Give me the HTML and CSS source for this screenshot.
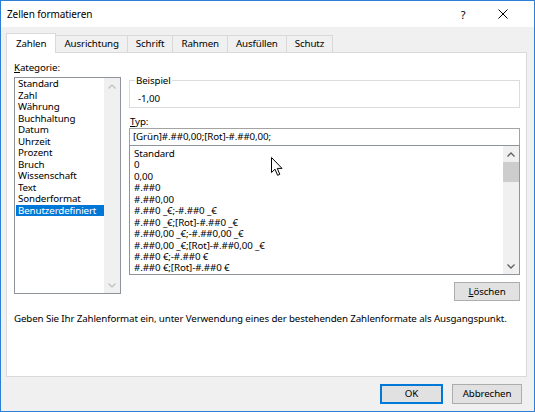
FILE: index.html
```html
<!DOCTYPE html>
<html lang="de">
<head>
<meta charset="utf-8">
<title>Zellen formatieren</title>
<link rel="stylesheet" href="styles.css">
</head>
<body>
<div class="window">
  <div class="titlebar">
    <span class="title">Zellen formatieren</span>
    <span class="help">?</span>
    <span class="close"><svg width="10" height="10" viewBox="0 0 10 10"><path d="M0.5 0.5L9.5 9.5M9.5 0.5L0.5 9.5" stroke="#000" stroke-width="1" fill="none"/></svg></span>
  </div>
  <div class="tabs">
    <div class="tab active">Zahlen</div>
    <div class="tab">Ausrichtung</div>
    <div class="tab">Schrift</div>
    <div class="tab">Rahmen</div>
    <div class="tab">Ausfüllen</div>
    <div class="tab">Schutz</div>
  </div>
  <div class="panel">
    <div class="cols">
      <div class="left">
        <div class="label"><u>K</u>ategorie:</div>
        <div class="listbox cat">
          <ul class="items">
            <li>Standard</li>
            <li>Zahl</li>
            <li>Währung</li>
            <li>Buchhaltung</li>
            <li>Datum</li>
            <li>Uhrzeit</li>
            <li>Prozent</li>
            <li>Bruch</li>
            <li>Wissenschaft</li>
            <li>Text</li>
            <li>Sonderformat</li>
            <li class="selected">Benutzerdefiniert</li>
          </ul>
          <div class="vscroll disabled">
            <div class="arrow"><svg width="8" height="5" viewBox="0 0 8 5"><path d="M0.5 4.5L4 1L7.5 4.5" stroke="currentColor" stroke-width="1.2" fill="none"/></svg></div>
            <div class="track"></div>
            <div class="arrow"><svg width="8" height="5" viewBox="0 0 8 5"><path d="M0.5 0.5L4 4L7.5 0.5" stroke="currentColor" stroke-width="1.2" fill="none"/></svg></div>
          </div>
        </div>
      </div>
      <div class="right">
        <fieldset class="sample">
          <legend>Beispiel</legend>
          <div class="sample-val">-1,00</div>
        </fieldset>
        <div class="label typ"><u>T</u>yp:</div>
        <div class="input">[Grün]#.##0,00;[Rot]-#.##0,00;</div>
        <div class="listbox fmt">
          <ul class="items">
            <li>Standard</li>
            <li>0</li>
            <li>0,00</li>
            <li>#.##0</li>
            <li>#.##0,00</li>
            <li>#.##0 _€;-#.##0 _€</li>
            <li>#.##0 _€;[Rot]-#.##0 _€</li>
            <li>#.##0,00 _€;-#.##0,00 _€</li>
            <li>#.##0,00 _€;[Rot]-#.##0,00 _€</li>
            <li>#.##0 €;-#.##0 €</li>
            <li>#.##0 €;[Rot]-#.##0 €</li>
          </ul>
          <div class="vscroll">
            <div class="arrow"><svg width="8" height="5" viewBox="0 0 8 5"><path d="M0.5 4.5L4 1L7.5 4.5" stroke="currentColor" stroke-width="1.3" fill="none"/></svg></div>
            <div class="track"><div class="thumb"></div></div>
            <div class="arrow"><svg width="8" height="5" viewBox="0 0 8 5"><path d="M0.5 0.5L4 4L7.5 0.5" stroke="currentColor" stroke-width="1.3" fill="none"/></svg></div>
          </div>
        </div>
        <div class="btnrow"><button class="btn del"><u>L</u>öschen</button></div>
      </div>
    </div>
    <p class="desc">Geben Sie Ihr Zahlenformat ein, unter Verwendung eines der bestehenden Zahlenformate als Ausgangspunkt.</p>
  </div>
  <div class="footer">
    <button class="btn default">OK</button>
    <button class="btn cancel">Abbrechen</button>
  </div>
  <svg class="cursor" width="13" height="20" viewBox="0 0 13 20"><path d="M0.5 0.5L0.5 15.5L4 12.2L6.6 18.3L8.8 17.4L6.3 11.4L11 11.4Z" fill="#fff" stroke="#000" stroke-width="1" stroke-linejoin="round"/></svg>
</div>
</body>
</html>
```

FILE: styles.css
```css
* { box-sizing: border-box; }

html, body {
  margin: 0;
  padding: 0;
  background: #f0f0f0;
}

body {
  font-family: "Noto Sans", "Open Sans", sans-serif;
  font-size: 9.75px;
  letter-spacing: -0.12px;
  color: #000;
}

.window {
  position: relative;
  width: 535px;
  height: 412px;
  border: 1px solid #2b7fd6;
  background: #f0f0f0;
  display: flex;
  flex-direction: column;
  overflow: hidden;
}

.titlebar {
  height: 26px;
  flex: 0 0 26px;
  background: #fff;
  display: flex;
  align-items: center;
  padding-left: 6px;
  padding-right: 11px;
}

.title {
  font-size: 10px;
  letter-spacing: -0.1px;
}

.help {
  margin-left: auto;
  width: 40px;
  text-align: center;
  font-size: 11px;
}

.close {
  width: 40px;
  display: flex;
  justify-content: center;
  align-items: center;
}

.tabs {
  display: flex;
  align-items: flex-end;
  height: 20px;
  margin-top: 6px;
  margin-bottom: -1px;
  padding-left: 5px;
  position: relative;
  z-index: 1;
}

.tab {
  height: 17px;
  margin-bottom: 1px;
  padding: 0 8px;
  line-height: 16px;
  border: 1px solid #d9d9d9;
  border-bottom: none;
  margin-left: -1px;
  background: #f0f0f0;
}

.tab:first-child { margin-left: 0; }

.tab.active {
  height: 20px;
  margin-bottom: 0;
  padding: 0 9px;
  line-height: 20px;
  background: #fff;
  position: relative;
  z-index: 2;
}

.panel {
  height: 325px;
  flex: 0 0 325px;
  margin: 0 7px 0 5px;
  background: #fff;
  border: 1px solid #d9d9d9;
  padding: 8px 6px 0 7px;
}

.cols {
  display: flex;
  gap: 8px;
}

.left {
  width: 107px;
  flex: 0 0 107px;
}

.right {
  flex: 1;
  display: flex;
  flex-direction: column;
}

.label {
  line-height: 14px;
  height: 14px;
}

.listbox {
  border: 1px solid #8f949b;
  background: #fff;
  display: flex;
}

.listbox .items {
  list-style: none;
  margin: 0;
  padding: 0;
  flex: 1;
  min-width: 0;
  white-space: nowrap;
  overflow: hidden;
}

.cat {
  margin-top: 2px;
  height: 217px;
}

.cat .items li {
  line-height: 11.5px;
  height: 11.5px;
  padding-left: 2px;
  margin-left: 1px;
}

.cat .items li.selected {
  background: #0078d7;
  color: #fff;
}

.vscroll {
  width: 16px;
  flex: 0 0 16px;
  background: #f0f0f0;
  display: flex;
  flex-direction: column;
  color: #606060;
}

.vscroll.disabled {
  color: #bfbfbf;
}

.vscroll .arrow {
  height: 16px;
  flex: 0 0 16px;
  display: flex;
  align-items: center;
  justify-content: center;
}

.vscroll .track {
  flex: 1;
}

.vscroll .thumb {
  height: 20px;
  background: #cdcdcd;
}

.sample {
  margin: 13px 0 0;
  padding: 0 0 0 5px;
  border: 1px solid #dcdcdc;
  min-width: 0;
}

.sample legend {
  padding: 0 1px;
  line-height: 13px;
}

.sample-val {
  padding: 5px 0 1px 3px;
  line-height: 14px;
}

.typ {
  margin-top: 7px;
  padding-left: 1px;
  height: 13px;
  line-height: 13px;
}

.input {
  height: 18px;
  border: 1px solid #a3a3a3;
  border-bottom-color: #8f949b;
  padding-left: 3px;
  line-height: 16px;
  background: #fff;
}

.fmt {
  margin-top: -1px;
  height: 130px;
}

.fmt .items {
  padding: 2px 0 0 4px;
}

.fmt .items li {
  line-height: 11.45px;
  height: 11.45px;
}

.btnrow {
  display: flex;
  justify-content: flex-end;
  margin-top: 7px;
}

.btn {
  font-family: inherit;
  font-size: 9.75px;
  letter-spacing: -0.12px;
  color: #000;
  background: #e1e1e1;
  border: 1px solid #adadad;
  height: 19px;
  padding: 0;
  margin: 0;
  line-height: 17px;
}

.del {
  width: 66px;
}

.desc {
  margin: 11px 0 0;
  line-height: 14px;
}

.footer {
  display: flex;
  justify-content: flex-end;
  gap: 9px;
  padding: 7px 12px 0 0;
}

.footer .btn {
  height: 20px;
  line-height: 18px;
}

.default {
  width: 63px;
  border: 2px solid #0078d7;
  line-height: 16px !important;
}

.cancel {
  width: 70px;
}

.cursor {
  position: absolute;
  left: 270px;
  top: 156px;
}
```
